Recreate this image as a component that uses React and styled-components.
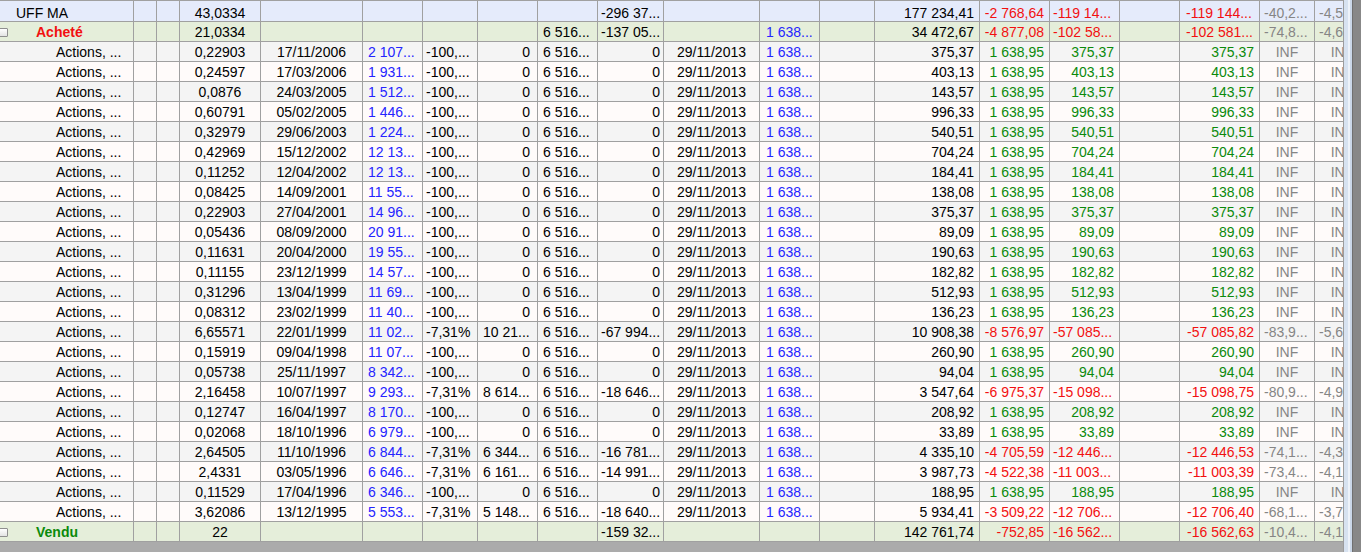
import React from 'react';
import styled, { createGlobalStyle } from 'styled-components';

const GlobalStyle = createGlobalStyle`
  html, body { margin: 0; padding: 0; overflow: hidden; background: #ababab; }
  body { font-family: "Liberation Sans", Arial, sans-serif; font-size: 14px; }
`;

const COLS = [
  { w: 134, align: 'left' },
  { w: 23 },
  { w: 23 },
  { w: 81, align: 'center' },
  { w: 102, align: 'center' },
  { w: 60, align: 'left', pl: 5 },
  { w: 55, align: 'left', pl: 3 },
  { w: 60, align: 'right', pr: 7, pl: 5 },
  { w: 60, align: 'left', pl: 5 },
  { w: 66, align: 'right', pr: 3, pl: 3 },
  { w: 96, align: 'center' },
  { w: 60, align: 'left', pl: 6 },
  { w: 55 },
  { w: 105, align: 'right', pr: 5 },
  { w: 70, align: 'right', pr: 5, pl: 3 },
  { w: 70, align: 'right', pr: 5, pl: 3 },
  { w: 60 },
  { w: 80, align: 'right', pr: 5, pl: 6 },
  { w: 55, align: 'center', pl: 4 },
  { w: 55, align: 'center', pl: 4 },
];

const COLORS = {
  k: '#000000',
  b: '#2424ff',
  g: '#0b8a0b',
  r: '#f21010',
  y: '#858585',
};

const BG = {
  top: '#e5ebfb',
  group: '#e5eeda',
  odd: '#f4f4f4',
  even: '#fffbfa',
};

const Window = styled.div`
  display: flex;
  height: 552px;
  width: 1361px;
  background: #ababab;
`;

const GridArea = styled.div`
  width: 1343px;
  flex: none;
  overflow: hidden;
  border-top: 1px solid #a0a0a0;
  box-sizing: border-box;
  height: 552px;
  background: #ababab;
`;

const RightFrame = styled.div`
  flex: 1;
  background: linear-gradient(
    to right,
    #9c9c9c 0px, #9c9c9c 1px,
    #d7e2f0 1px, #d7e2f0 5px,
    #eef3fa 5px, #eef3fa 7px,
    #cbd8e9 7px, #cbd8e9 9px,
    #707070 9px, #707070 10px,
    #888888 10px
  );
`;

const Row = styled.div`
  display: grid;
  grid-template-columns: ${COLS.map((c) => c.w + 'px').join(' ')};
  width: 1370px;
  height: ${(p) => (p.$first ? 21 : 20)}px;
  box-sizing: border-box;
  border-bottom: 1px solid #a0a0a0;
  background: ${(p) => BG[p.$bg]};
`;

const Cell = styled.div`
  box-sizing: border-box;
  border-right: 1px solid #a0a0a0;
  padding: ${(p) => p.$pt}px ${(p) => p.$pr}px 0 ${(p) => p.$pl}px;
  text-align: ${(p) => p.$align};
  color: ${(p) => COLORS[p.$color]};
  line-height: 17px;
  white-space: nowrap;
  overflow: hidden;
`;

const NameCell = styled.div`
  box-sizing: border-box;
  border-right: 1px solid #a0a0a0;
  padding: ${(p) => p.$pt}px 0 0 ${(p) => p.$indent}px;
  display: flex;
  align-items: center;
  line-height: 17px;
  white-space: nowrap;
  overflow: hidden;
  color: #000;
`;

const Expander = styled.span`
  flex: none;
  width: 10px;
  height: 9px;
  box-sizing: border-box;
  margin-left: -2px;
  margin-right: 28px;
  border: 1px solid #8f8f8f;
  border-radius: 1px;
  background: linear-gradient(to bottom, #ffffff, #e4e4e4);
`;

const GroupLabel = styled.span`
  font-weight: bold;
  color: ${(p) => COLORS[p.$color]};
`;

const top = {
  bg: 'top',
  name: 'UFF MA',
  cells: { 3: ['43,0334'], 9: ['-296 37...'], 13: ['177 234,41'], 14: ['-2 768,64', 'r'], 15: ['-119 14...', 'r'], 17: ['-119 144...', 'r'], 18: ['-40,2...', 'y'], 19: ['-4,5...', 'y'] },
};

const achete = {
  bg: 'group',
  name: 'Acheté',
  nameColor: 'r',
  group: true,
  cells: { 3: ['21,0334'], 8: ['6 516...'], 9: ['-137 05...'], 11: ['1 638...', 'b'], 13: ['34 472,67'], 14: ['-4 877,08', 'r'], 15: ['-102 58...', 'r'], 17: ['-102 581...', 'r'], 18: ['-74,8...', 'y'], 19: ['-4,6...', 'y'] },
};

const vendu = {
  bg: 'group',
  name: 'Vendu',
  nameColor: 'g',
  group: true,
  cells: { 3: ['22'], 9: ['-159 32...'], 13: ['142 761,74'], 14: ['-752,85', 'r'], 15: ['-16 562...', 'r'], 17: ['-16 562,63', 'r'], 18: ['-10,4...', 'y'], 19: ['-4,1...', 'y'] },
};

const pos = [
  ['0,22903', '17/11/2006', '2 107...', '375,37'],
  ['0,24597', '17/03/2006', '1 931...', '403,13'],
  ['0,0876', '24/03/2005', '1 512...', '143,57'],
  ['0,60791', '05/02/2005', '1 446...', '996,33'],
  ['0,32979', '29/06/2003', '1 224...', '540,51'],
  ['0,42969', '15/12/2002', '12 13...', '704,24'],
  ['0,11252', '12/04/2002', '12 13...', '184,41'],
  ['0,08425', '14/09/2001', '11 55...', '138,08'],
  ['0,22903', '27/04/2001', '14 96...', '375,37'],
  ['0,05436', '08/09/2000', '20 91...', '89,09'],
  ['0,11631', '20/04/2000', '19 55...', '190,63'],
  ['0,11155', '23/12/1999', '14 57...', '182,82'],
  ['0,31296', '13/04/1999', '11 69...', '512,93'],
  ['0,08312', '23/02/1999', '11 40...', '136,23'],
  ['6,65571', '22/01/1999', '11 02...', '10 21...', '-67 994...', '10 908,38', '-8 576,97', '-57 085...', '-57 085,82', '-83,9...', '-5,6...'],
  ['0,15919', '09/04/1998', '11 07...', '260,90'],
  ['0,05738', '25/11/1997', '8 342...', '94,04'],
  ['2,16458', '10/07/1997', '9 293...', '8 614...', '-18 646...', '3 547,64', '-6 975,37', '-15 098...', '-15 098,75', '-80,9...', '-4,9...'],
  ['0,12747', '16/04/1997', '8 170...', '208,92'],
  ['0,02068', '18/10/1996', '6 979...', '33,89'],
  ['2,64505', '11/10/1996', '6 844...', '6 344...', '-16 781...', '4 335,10', '-4 705,59', '-12 446...', '-12 446,53', '-74,1...', '-4,3...'],
  ['2,4331', '03/05/1996', '6 646...', '6 161...', '-14 991...', '3 987,73', '-4 522,38', '-11 003...', '-11 003,39', '-73,4...', '-4,1...'],
  ['0,11529', '17/04/1996', '6 346...', '188,95'],
  ['3,62086', '13/12/1995', '5 553...', '5 148...', '-18 640...', '5 934,41', '-3 509,22', '-12 706...', '-12 706,40', '-68,1...', '-3,7...'],
];

const actionRows = pos.map((d, i) => {
  const base = { 3: [d[0]], 4: [d[1]], 5: [d[2], 'b'], 8: ['6 516...'], 10: ['29/11/2013'], 11: ['1 638...', 'b'] };
  let cells;
  if (d.length === 4) {
    cells = {
      ...base,
      6: ['-100,...'], 7: ['0'], 9: ['0'], 13: [d[3]],
      14: ['1 638,95', 'g'], 15: [d[3], 'g'], 17: [d[3], 'g'], 18: ['INF', 'y'], 19: ['INF', 'y'],
    };
  } else {
    cells = {
      ...base,
      6: ['-7,31%'], 7: [d[3]], 9: [d[4]], 13: [d[5]],
      14: [d[6], 'r'], 15: [d[7], 'r'], 17: [d[8], 'r'], 18: [d[9], 'y'], 19: [d[10], 'y'],
    };
  }
  return { bg: i % 2 === 0 ? 'odd' : 'even', name: 'Actions, ...', cells };
});

const rows = [top, achete, ...actionRows, vendu];

function DataRow({ row, first }) {
  const pt = first ? 4 : 2;
  const indent = row === top ? 16 : row.group ? 0 : 56;
  return (
    <Row $bg={row.bg} $first={first}>
      <NameCell $pt={pt} $indent={indent}>
        {row.group ? (
          <>
            <Expander />
            <GroupLabel $color={row.nameColor}>{row.name}</GroupLabel>
          </>
        ) : (
          row.name
        )}
      </NameCell>
      {COLS.slice(1).map((c, j) => {
        const idx = j + 1;
        const v = row.cells[idx];
        const text = v ? v[0] : '';
        const color = v && v[1] ? v[1] : 'k';
        let align = c.align || 'left';
        const truncated = text.endsWith('...');
        if (align !== 'left' && truncated) align = 'left';
        const pl = align === 'center' ? 0 : c.pl || 0;
        return (
          <Cell
            key={idx}
            $pt={pt}
            $align={align}
            $pl={pl}
            $pr={align === 'center' ? 0 : c.pr || 0}
            $color={color}
          >
            {text}
          </Cell>
        );
      })}
    </Row>
  );
}

export default function App() {
  return (
    <>
      <GlobalStyle />
      <Window>
        <GridArea>
          {rows.map((r, i) => (
            <DataRow key={i} row={r} first={i === 0} />
          ))}
        </GridArea>
        <RightFrame />
      </Window>
    </>
  );
}
